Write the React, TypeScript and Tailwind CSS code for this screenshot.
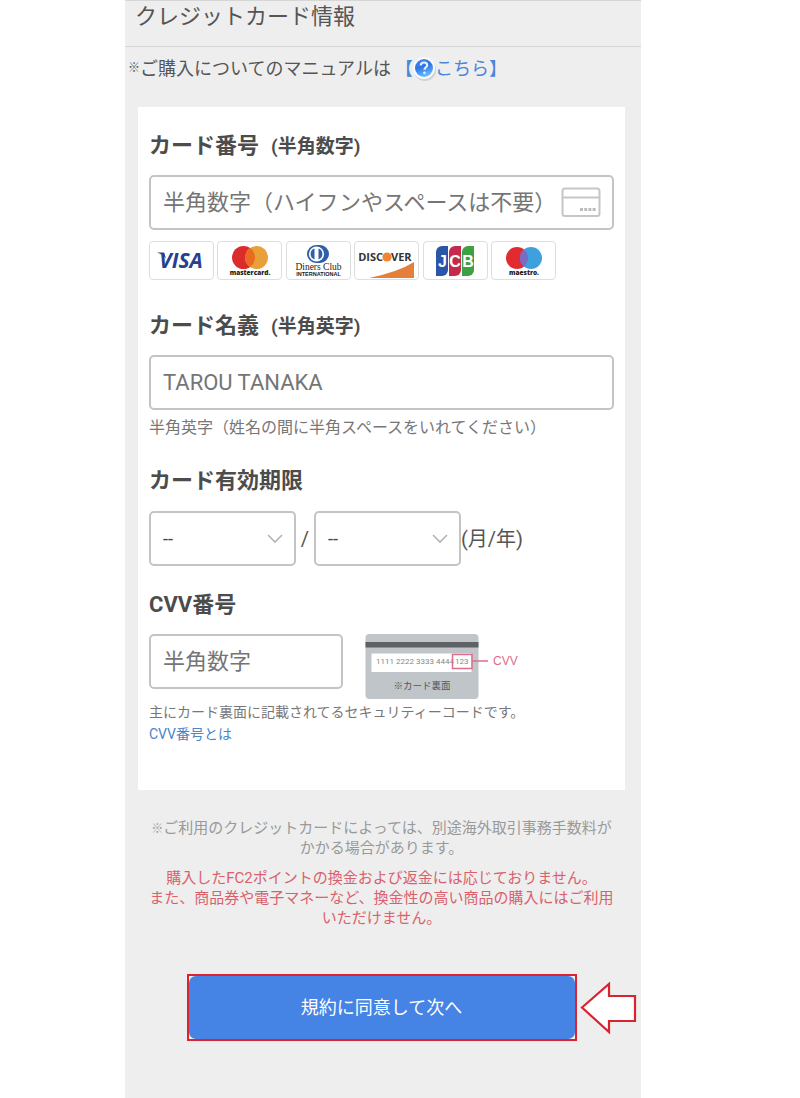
import type { ReactNode } from "react";

const FONT = "font-[Roboto,'Noto_Sans_CJK_JP',sans-serif]";
const BOX =
  "w-full min-w-0 rounded-[5px] border-2 border-[#c4c4c4] bg-white text-[#444] focus:border-[#4583e4] focus:outline-none";

const MONTHS = ["01", "02", "03", "04", "05", "06", "07", "08", "09", "10", "11", "12"];
const YEARS = ["25", "26", "27", "28", "29", "30", "31", "32", "33", "34"];

function HelpIcon() {
  return (
    <svg width="26" height="26" viewBox="0 0 26 26" className="shrink-0" aria-hidden="true">
      <defs>
        <linearGradient id="help" x1="0" y1="0" x2="0.3" y2="1">
          <stop offset="0" stopColor="#4f86e8" />
          <stop offset="0.5" stopColor="#2f74e6" />
          <stop offset="1" stopColor="#62b8fb" />
        </linearGradient>
      </defs>
      <circle cx="14" cy="15" r="11" fill="#c4c4c4" opacity="0.7" />
      <circle cx="13" cy="13" r="11" fill="#fbfbfb" />
      <circle cx="13" cy="13" r="9" fill="url(#help)" />
      <path
        d="M9.8 10.6c0-2 1.4-3.1 3.2-3.1s3.2 1.1 3.2 2.8c0 2.1-2.7 2.2-2.7 4.4"
        fill="none"
        stroke="#e4eefc"
        strokeWidth="2.2"
      />
      <circle cx="13.4" cy="17.8" r="1.4" fill="#e4eefc" />
    </svg>
  );
}

function CardOutline() {
  return (
    <svg width="41" height="31" viewBox="0 0 41 31" aria-hidden="true">
      <rect x="1.5" y="1.5" width="37" height="27.5" rx="2.5" fill="none" stroke="#c6c6c6" strokeWidth="2" />
      <path d="M1.5 10.5h37" stroke="#c6c6c6" strokeWidth="2" />
      <path d="M19 22.5h16" stroke="#bdbdbd" strokeWidth="3" strokeDasharray="3 1.2" />
    </svg>
  );
}

function Brand({ name, children }: { name: string; children: ReactNode }) {
  return (
    <li className="h-[39px] w-[65px] rounded-[4px] border border-[#dedede] bg-white">
      <svg viewBox="0 0 63 37" className="h-full w-full" role="img" aria-label={name}>
        {children}
      </svg>
    </li>
  );
}

function Brands() {
  return (
    <ul className="mt-[11px] flex max-w-[407px] justify-between">
      <Brand name="VISA">
        <text x="31" y="26" textAnchor="middle" fontFamily="Open Sans" fontSize="21" fontWeight="700" fontStyle="italic" fill="#27408f">
          VISA
        </text>
        <path d="M7 10.500h7l2 6q-3-4-9-6" fill="#27408f" />
      </Brand>
      <Brand name="mastercard">
        <circle cx="25.5" cy="15.5" r="11.5" fill="#dc2b2b" />
        <circle cx="38.5" cy="15.5" r="11.5" fill="#e9a03a" />
        <path d="M32 6a11.500 11.500 0 0 1 0 19a11.500 11.500 0 0 1 0-19" fill="#ea6a22" />
        <text x="32" y="32.500" textAnchor="middle" fontFamily="Open Sans" fontSize="6.500" fontWeight="800" fill="#222">
          mastercard.
        </text>
      </Brand>
      <Brand name="Diners Club International">
        <path d="M29 3h4a9 9 0 0 1 0 18h-4a9 9 0 0 1 0-18" fill="#2e5fa8" />
        <circle cx="29.500" cy="12" r="7.600" fill="#fff" />
        <path d="M27.500 6.600a5.700 5.700 0 0 0 0 10.800zM31.500 6.600a5.700 5.700 0 0 1 0 10.800z" fill="#2e5fa8" />
        <text x="31.500" y="28" textAnchor="middle" fontFamily="Liberation Serif" fontSize="9.500" fill="#222">
          Diners Club
        </text>
        <text x="31.500" y="34" textAnchor="middle" fontFamily="Liberation Sans" fontSize="5.500" fontWeight="700" fill="#222">
          INTERNATIONAL
        </text>
      </Brand>
      <Brand name="Discover">
        <text x="28" y="19" textAnchor="end" fontFamily="Open Sans" fontSize="11" fontWeight="700" fill="#333">
          DISC
        </text>
        <circle cx="32" cy="15" r="4.600" fill="#ee8636" />
        <text x="36" y="19" fontFamily="Open Sans" fontSize="11" fontWeight="700" fill="#333">
          VER
        </text>
        <path d="M14 36Q43 30 59 20v16z" fill="#e5803b" />
      </Brand>
      <Brand name="JCB">
        <path d="M12 10a6 6 0 0 1 6-6h6v24a6 6 0 0 1-6 6h-6z" fill="#2a55a8" />
        <path d="M25 10a6 6 0 0 1 6-6h6v24a6 6 0 0 1-6 6h-6z" fill="#c52a4c" />
        <path d="M38 10a6 6 0 0 1 6-6h6v24a6 6 0 0 1-6 6h-6z" fill="#3fa043" />
        <g fontFamily="Liberation Sans" fontSize="16" fontWeight="700" fill="#fff" textAnchor="middle">
          <text x="18.500" y="24.500">J</text>
          <text x="31" y="24.500">C</text>
          <text x="44" y="24.500">B</text>
        </g>
      </Brand>
      <Brand name="maestro">
        <circle cx="25" cy="16" r="11" fill="#e12b31" />
        <circle cx="39" cy="16" r="11" fill="#3fa0de" />
        <path d="M32 7.500a11 11 0 0 1 0 17a11 11 0 0 1 0-17" fill="#7a6bc4" />
        <text x="32" y="33" textAnchor="middle" fontFamily="Open Sans" fontSize="6.500" fontWeight="800" fill="#222">
          maestro.
        </text>
      </Brand>
    </ul>
  );
}

function CardBack() {
  return (
    <svg width="154" height="65" viewBox="0 0 154 65" className="ml-[22px] shrink-0" role="img" aria-label="CVV">
      <rect x="0.5" y="0" width="113" height="65" rx="4" fill="#bfc5c9" />
      <rect x="0.5" y="8" width="113" height="5.500" fill="#5f6264" />
      <rect x="6.500" y="19.500" width="100" height="18.500" fill="#fff" />
      <text x="11" y="30" fontFamily="Roboto" fontSize="8" fill="#888">
        1111 2222 3333 4444
      </text>
      <text x="90" y="30" fontFamily="Roboto" fontSize="8" fill="#888">
        123
      </text>
      <rect x="87.500" y="20.500" width="19.500" height="14" fill="none" stroke="#dd6d8c" strokeWidth="1.500" />
      <path d="M107 27h16" stroke="#dd6d8c" strokeWidth="1.500" />
      <text x="128" y="30.500" fontFamily="Liberation Sans" fontSize="12" fill="#dd6d8c">
        CVV
      </text>
      <text x="57" y="55" textAnchor="middle" fontFamily="Noto Sans CJK JP" fontSize="9.500" fill="#555">
        ※カード裏面
      </text>
    </svg>
  );
}

function DateSelect({ label, options }: { label: string; options: string[] }) {
  return (
    <div className="relative h-[55px] w-[147px]">
      <select
        aria-label={label}
        defaultValue=""
        className={`${BOX} h-full appearance-none px-3 text-[18px]`}
      >
        <option value="">--</option>
        {options.map((o) => (
          <option key={o} value={o}>
            {o}
          </option>
        ))}
      </select>
      <svg
        width="16"
        height="10"
        viewBox="0 0 16 10"
        className="pointer-events-none absolute right-[13px] top-[23px]"
        aria-hidden="true"
      >
        <path d="M1 1l7 7 7-7" fill="none" stroke="#b5b5b5" strokeWidth="1.600" />
      </svg>
    </div>
  );
}

function FieldLabel({ htmlFor, hint, children }: { htmlFor: string; hint?: string; children: ReactNode }) {
  return (
    <label htmlFor={htmlFor} className="block text-[22px] font-bold leading-[33px] text-[#4c4c4c]">
      {children}
      {hint && <span className="ml-3 text-[19px] leading-none">{hint}</span>}
    </label>
  );
}

export default function App() {
  return (
    <div className={`min-h-screen bg-white pl-[125px] pr-[159px] ${FONT}`}>
      <main className="min-h-screen bg-[#eeeeee]">
        <header className="h-[47px] border-b border-t border-[#d6d6d6] px-[10px]">
          <h1 className="text-[22px] leading-[31px] text-[#555]">クレジットカード情報</h1>
        </header>

        <p className="flex h-[42px] items-center whitespace-nowrap px-[3px] text-[18px] text-[#555]">
          <span className="text-xs">※</span>
          ご購入についてのマニュアルは
          <a href="#manual" className="ml-1 flex items-center text-[#4a86da]">
            <span>【</span>
            <span className="-mx-[2px]">
              <HelpIcon />
            </span>
            <span>こちら】</span>
          </a>
        </p>

        <div className="ml-[13px] mr-[16px] pt-[18px]">
          <form id="card-form" className="bg-white px-[11px] pb-[45px] pt-[22px]">
            <FieldLabel htmlFor="number" hint="(半角数字)">
              カード番号
            </FieldLabel>
            <div className="relative mt-[13px] h-[55px]">
              <input
                id="number"
                inputMode="numeric"
                placeholder="半角数字（ハイフンやスペースは不要）"
                className={`${BOX} h-full pl-3 text-[22px] placeholder:text-[#757575]`}
              />
              <span className="absolute right-[12px] top-[12px]">
                <CardOutline />
              </span>
            </div>
            <Brands />

            <div className="mt-[29px]">
              <FieldLabel htmlFor="holder" hint="(半角英字)">
                カード名義
              </FieldLabel>
            </div>
            <input
              id="holder"
              placeholder="TAROU TANAKA"
              className={`${BOX} mt-[13px] block h-[55px] px-3 text-[22px] placeholder:text-[#757575]`}
            />
            <p className="mt-[6px] text-[16px] leading-6 text-[#777]">
              半角英字（姓名の間に半角スペースをいれてください）
            </p>

            <fieldset className="mt-6">
              <legend className="text-[22px] font-bold leading-[33px] text-[#4c4c4c]">カード有効期限</legend>
              <div className="mt-[14px] flex items-center text-[20px] text-[#555]">
                <DateSelect label="月" options={MONTHS} />
                <span className="w-[18px] text-center">/</span>
                <DateSelect label="年" options={YEARS} />
                <span>(月/年)</span>
              </div>
            </fieldset>

            <div className="mt-[22px]">
              <FieldLabel htmlFor="cvv">CVV番号</FieldLabel>
            </div>
            <div className="mt-[13px] flex items-start">
              <div className="h-[55px] w-[194px]">
                <input
                  id="cvv"
                  inputMode="numeric"
                  placeholder="半角数字"
                  className={`${BOX} h-full px-3 text-[22px] placeholder:text-[#757575]`}
                />
              </div>
              <CardBack />
            </div>
            <p className="mt-[2px] text-sm leading-[22px] text-[#777]">
              主にカード裏面に記載されてるセキュリティーコードです。
            </p>
            <a href="#cvv-help" className="block text-sm leading-[22px] text-[#4a86c8]">
              CVV番号とは
            </a>
          </form>

          <div className="px-2 pt-7 text-center text-[15px] leading-5">
            <p className="text-[#999]">
              <span className="text-xs leading-none">※</span>
              ご利用のクレジットカードによっては、別途海外取引事務手数料がかかる場合があります。
            </p>
            <p className="mt-[10px] text-[#d9616c]">
              購入したFC2ポイントの換金および返金には応じておりません。
              <br />
              また、商品券や電子マネーなど、換金性の高い商品の購入にはご利用いただけません。
            </p>
          </div>

          <div className="relative mx-auto mt-[46px] w-[390px] border-2 border-[#d9242f] bg-[#eeeeee]">
            <button
              type="submit"
              form="card-form"
              className="block h-[63px] w-full rounded-[7px] bg-[#4583e4] text-[18px] text-white"
            >
              規約に同意して次へ
            </button>
            <svg
              width="58"
              height="54"
              viewBox="0 0 58 54"
              className="absolute left-full top-[5px] ml-[5px]"
              aria-hidden="true"
            >
              <path
                d="M2 26.500L29 3v12h26v25H29v11z"
                fill="#fff"
                stroke="#d9242f"
                strokeWidth="2.200"
              />
            </svg>
          </div>
        </div>
      </main>
    </div>
  );
}
